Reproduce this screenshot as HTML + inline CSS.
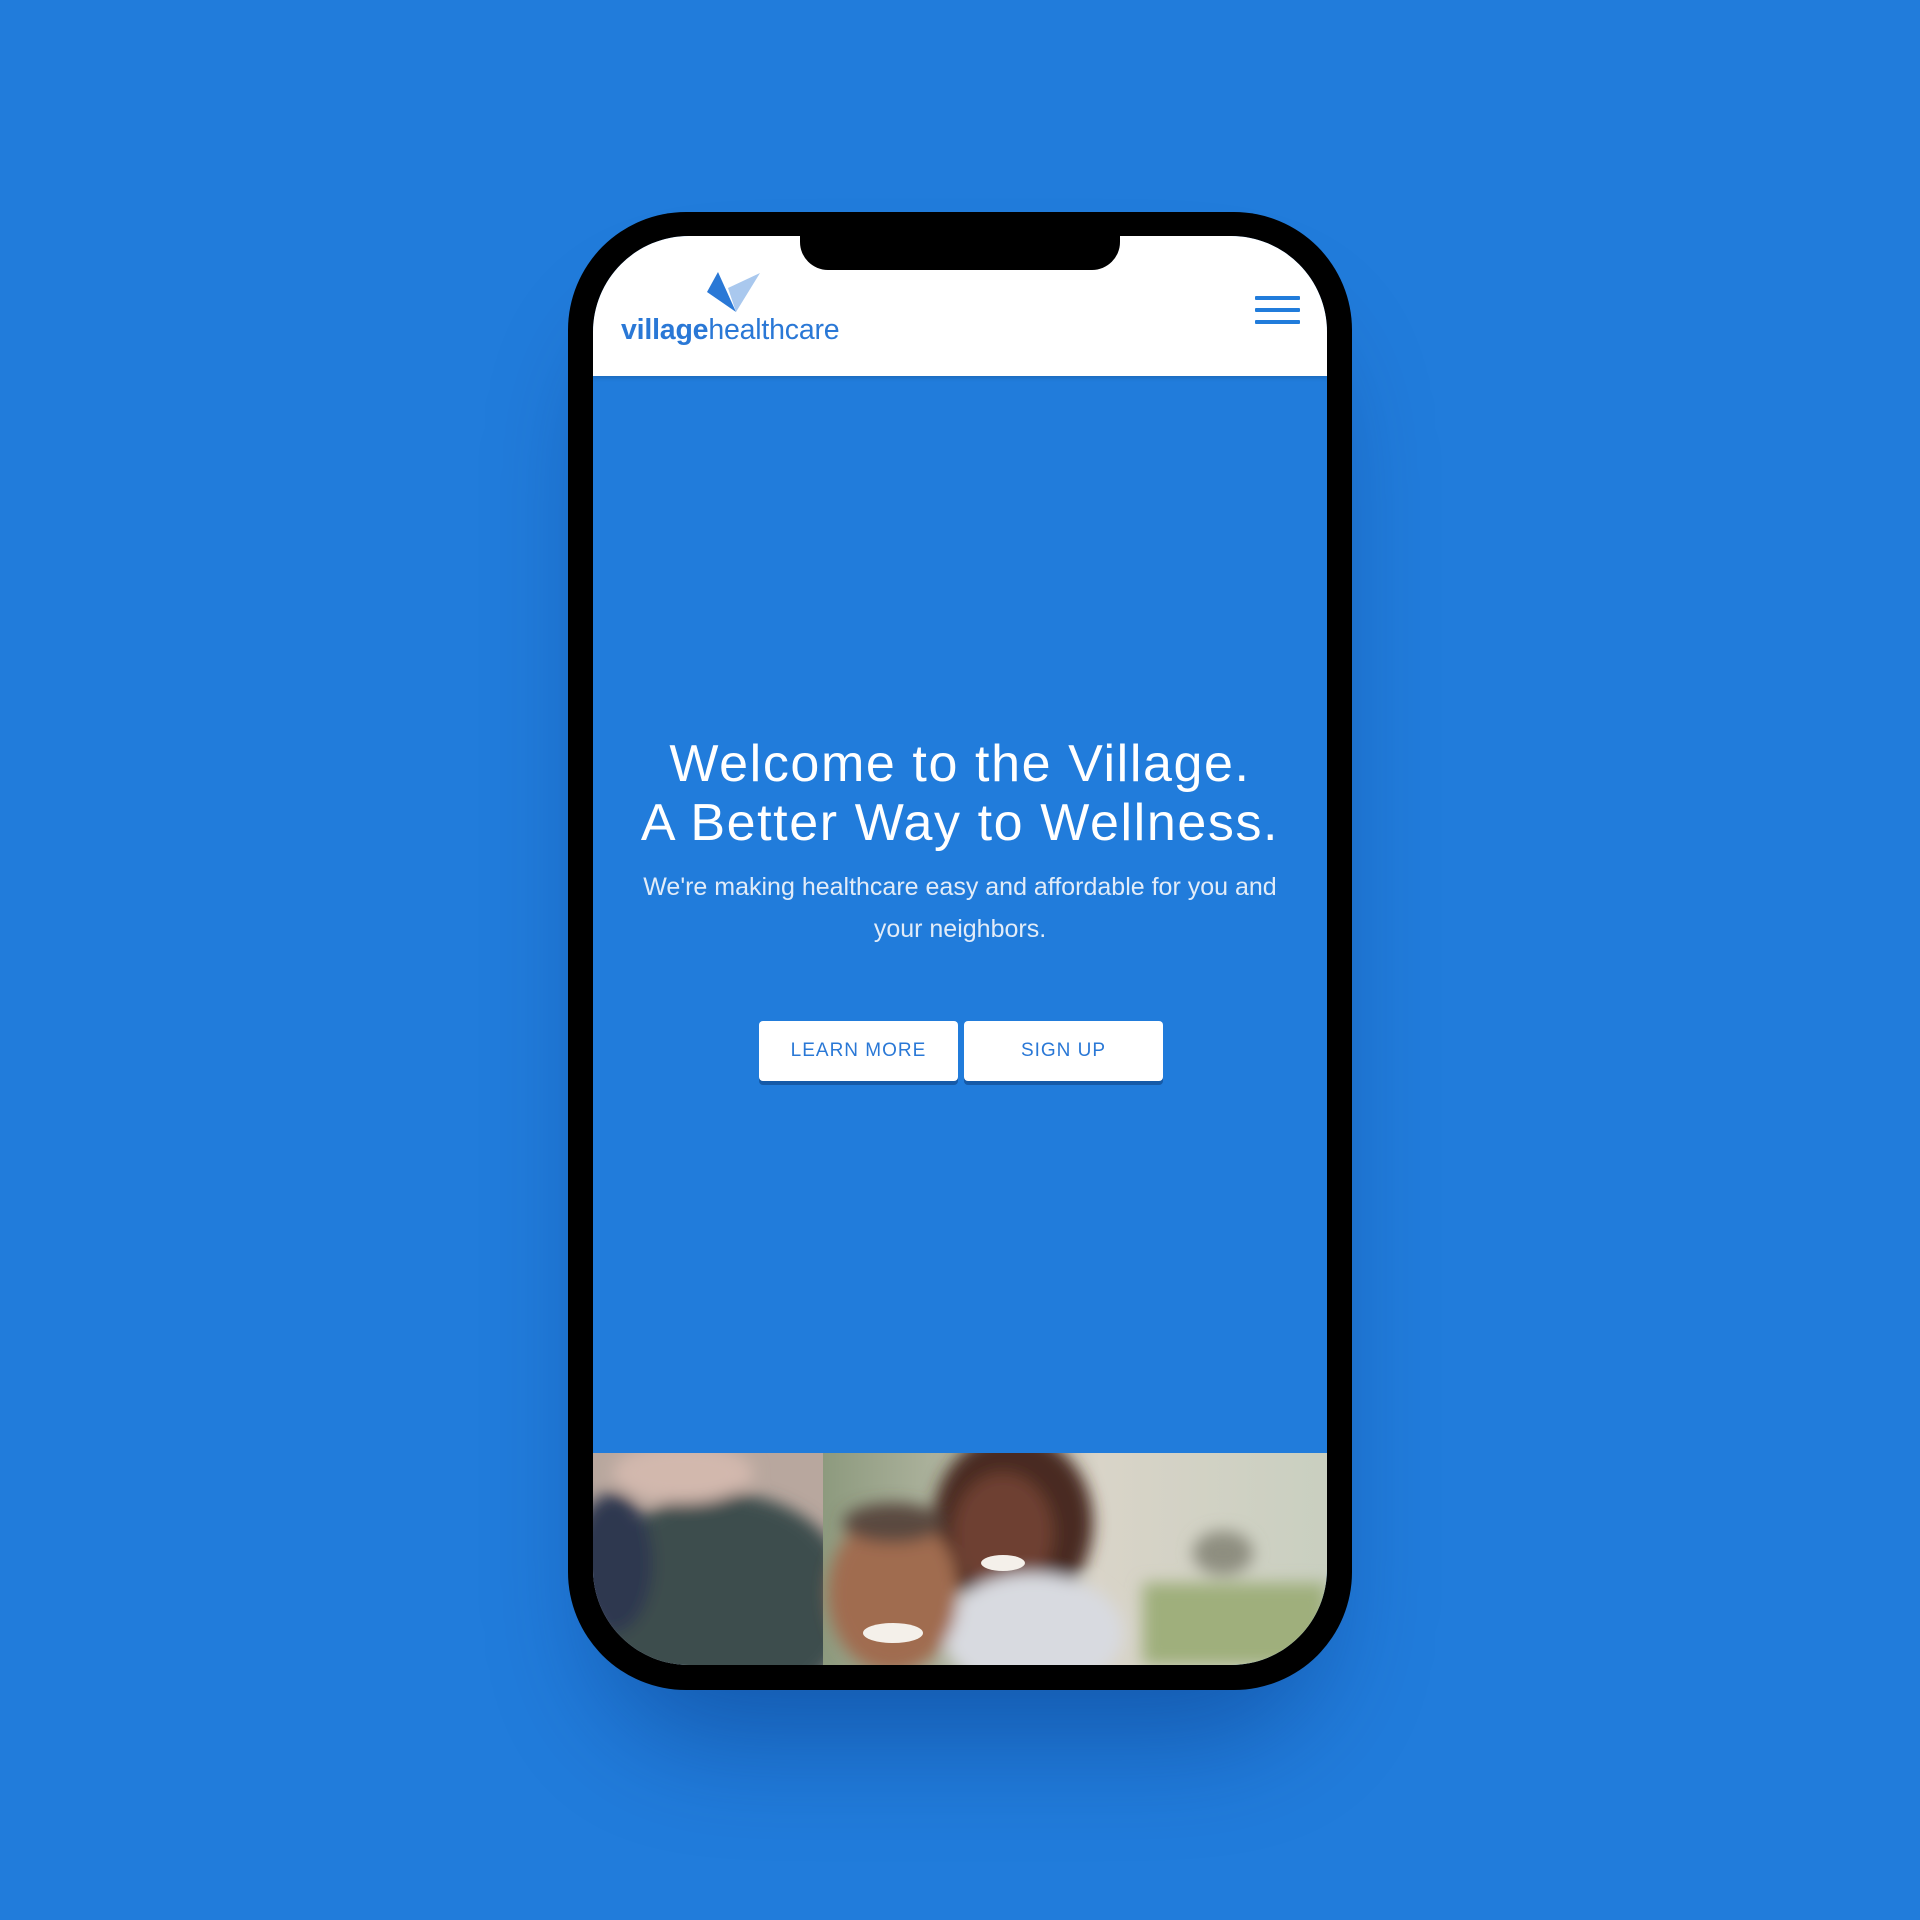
<!DOCTYPE html>
<html><head><meta charset="utf-8"><style>
html,body{margin:0;padding:0}
body{width:1920px;height:1920px;background:#217cdb;position:relative;overflow:hidden;font-family:"Liberation Sans",sans-serif}
.shadow{position:absolute;left:600px;top:260px;width:720px;height:1420px;border-radius:120px;box-shadow:0 60px 110px rgba(0,40,110,.4)}
.phone{position:absolute;left:568px;top:212px;width:784px;height:1478px;background:#000;border-radius:118px}
.screen{position:absolute;left:593px;top:236px;width:734px;height:1429px;border-radius:96px;overflow:hidden;background:#217cdb}
.header{position:absolute;left:0;top:0;width:734px;height:140px;background:#fff;box-shadow:0 2px 4px rgba(0,0,0,.15)}
.notch{position:absolute;left:800px;top:220px;width:320px;height:50px;background:#000;border-radius:0 0 28px 28px}
.logo{position:absolute;left:28px;top:78px;font-size:28.5px;color:#2a78d6;letter-spacing:-0.2px}
.logo b{font-weight:bold}
.ham{position:absolute;left:662px;top:60px;width:45px}
.ham div{height:4px;background:#217cdb;margin-bottom:8px;border-radius:1px}
h1{position:absolute;left:0;top:499px;width:734px;margin:0;text-align:center;color:#fff;font-weight:normal;font-size:52px;line-height:59px;letter-spacing:1.6px}
p{position:absolute;left:37px;top:630px;width:660px;margin:0;text-align:center;color:#e2ecf8;font-size:25px;line-height:42px}
.btn{position:absolute;top:785px;width:199px;height:60px;background:#fff;border-radius:4px;color:#2a78d6;font-size:19px;text-align:center;line-height:60px;letter-spacing:1px;box-shadow:0 4px 0 #155aa8}
.photos{position:absolute;left:0;top:1217px;width:734px;height:212px}
</style></head><body>
<div class="shadow"></div>
<div class="phone"></div>
<div class="screen">
 <div class="header">
  <svg style="position:absolute;left:0;top:0" width="200" height="100"><polygon points="125,36 114,56 143,76" fill="#2a78d6"/><polygon points="167,37 135,52 143,76" fill="#a9c8ee"/></svg>
  <div class="logo"><b>village</b>healthcare</div>
  <div class="ham"><div></div><div></div><div></div></div>
 </div>
 <h1>Welcome to the Village.<br>A Better Way to Wellness.</h1>
 <p>We're making healthcare easy and affordable for you and your neighbors.</p>
 <div class="btn" style="left:166px">LEARN MORE</div>
 <div class="btn" style="left:371px">SIGN UP</div>
 <svg class="photos" width="734" height="212">
  <defs>
   <filter id="b"><feGaussianBlur stdDeviation="8"/></filter>
   <linearGradient id="bg2" x1="0" x2="1"><stop offset="0" stop-color="#8d9a7e"/><stop offset=".55" stop-color="#d9d4c8"/><stop offset="1" stop-color="#c9cfc0"/></linearGradient>
  </defs>
  <rect x="0" y="0" width="231" height="212" fill="#b8a79e"/>
  <g filter="url(#b)">
   <ellipse cx="130" cy="150" rx="130" ry="110" fill="#3c4d4d"/>
   <ellipse cx="20" cy="110" rx="40" ry="70" fill="#2f3850"/>
   <ellipse cx="90" cy="20" rx="70" ry="30" fill="#d2b8ad"/>
  </g>
  <rect x="230" y="0" width="504" height="212" fill="url(#bg2)"/>
  <g filter="url(#b)">
   <rect x="550" y="130" width="184" height="82" fill="#9faf7c"/>
   <ellipse cx="630" cy="100" rx="30" ry="22" fill="#8e8e80"/>
   <ellipse cx="420" cy="70" rx="80" ry="90" fill="#4a2c20"/>
   <ellipse cx="410" cy="80" rx="50" ry="60" fill="#6e4030"/>
   <ellipse cx="440" cy="180" rx="90" ry="60" fill="#d8dae0"/>
   <ellipse cx="300" cy="140" rx="65" ry="80" fill="#a06c50"/>
   <ellipse cx="300" cy="70" rx="50" ry="20" fill="#5a4a40"/>
  </g>
  <ellipse cx="300" cy="180" rx="30" ry="10" fill="#f4f0ea"/>
  <ellipse cx="410" cy="110" rx="22" ry="8" fill="#f4f0ea"/>
 </svg>
</div>
<div class="notch"></div>
</body></html>
